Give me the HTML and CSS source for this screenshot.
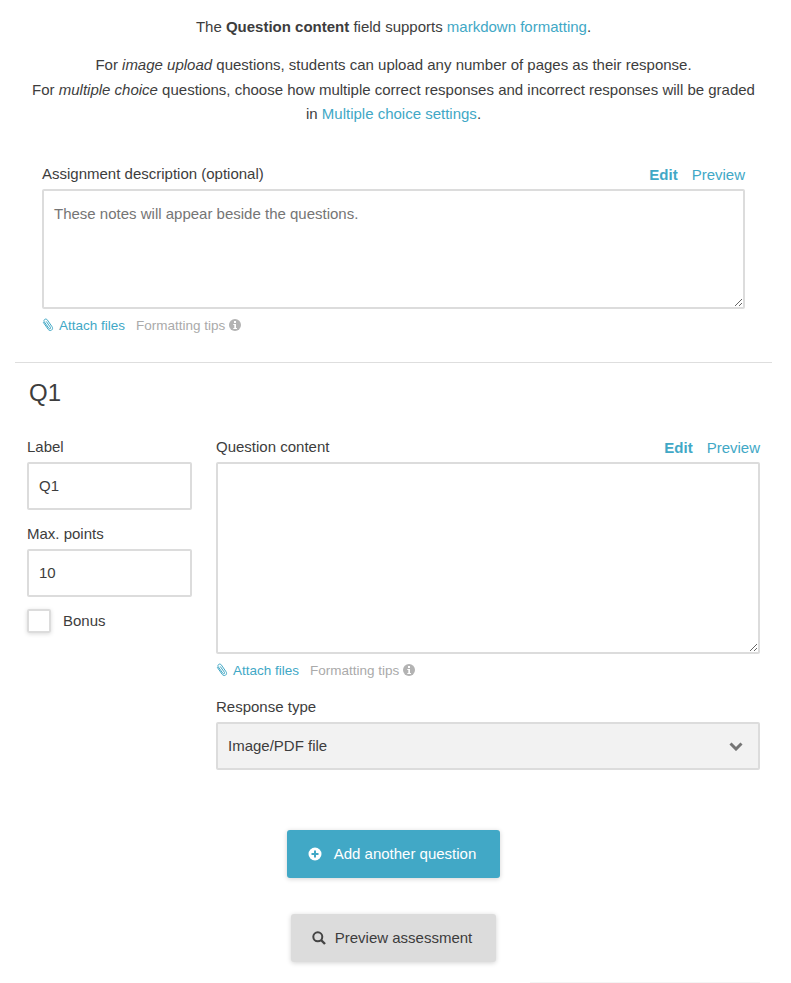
FILE: index.html
```html
<!DOCTYPE html>
<html>
  <head>
    <meta charset="utf-8" />
    <title>Edit assessment</title>
    <link rel="stylesheet" href="styles.css">
  </head>
  <body>
    <div class="help">
      <p>The <b>Question content</b> field supports <a href="#">markdown formatting</a>.</p>
      <p>
        For <i>image upload</i> questions, students can upload any number of pages as their response.<br>
        For <i>multiple choice</i> questions, choose how multiple correct responses and incorrect responses will be graded<br>
        in <a href="#">Multiple choice settings</a>.
      </p>
    </div>

    <div class="description">
      <div class="field-head">
        <label>Assignment description (optional)</label>
        <div class="tabs"><a class="active" href="#">Edit</a><a href="#">Preview</a></div>
      </div>
      <textarea class="desc-text" placeholder="These notes will appear beside the questions."></textarea>
      <div class="field-foot">
        <a href="#">
          <svg class="clip" viewBox="0 0 12 14"><path d="M1.200 4.200l5 7.200c.9 1.200 2.300 1.500 3.400.7s1.300-2.200.4-3.400L5.300 1.900C4.700 1 3.500.8 2.700 1.400S1.700 3 2.300 3.900l4.600 6.500c.4.500 1 .6 1.400.3s.5-.9.100-1.400L4.200 3.400" fill="none" stroke="#41a8c6" stroke-width="1"/></svg>
          Attach files
        </a>
        <span class="tips">Formatting tips
          <svg class="icon" viewBox="0 0 12 12"><circle cx="6" cy="6" r="6" fill="#b3b3b3"/><rect x="5" y="2" width="2" height="2" fill="#fff"/><path d="M4.300 5h2.700v4h1v1H4.300V9h1V6h-1z" fill="#fff"/></svg>
        </span>
      </div>
    </div>

    <hr class="divider">

    <div class="question">
      <h2>Q1</h2>
      <div class="question-row">
        <div class="side">
          <label>Label</label>
          <input class="text-input" type="text" value="Q1">
          <label class="points-label">Max. points</label>
          <input class="text-input" type="text" value="10">
          <div class="bonus"><span class="check"></span><label>Bonus</label></div>
        </div>
        <div class="main">
          <div class="field-head">
            <label>Question content</label>
            <div class="tabs"><a class="active" href="#">Edit</a><a href="#">Preview</a></div>
          </div>
          <textarea class="content-text"></textarea>
          <div class="field-foot">
            <a href="#">
              <svg class="clip" viewBox="0 0 12 14"><path d="M1.200 4.200l5 7.200c.9 1.200 2.300 1.500 3.400.7s1.300-2.200.4-3.400L5.300 1.900C4.700 1 3.500.8 2.700 1.400S1.700 3 2.300 3.900l4.600 6.500c.4.500 1 .6 1.400.3s.5-.9.100-1.400L4.200 3.400" fill="none" stroke="#41a8c6" stroke-width="1"/></svg>
              Attach files
            </a>
            <span class="tips">Formatting tips
              <svg class="icon" viewBox="0 0 12 12"><circle cx="6" cy="6" r="6" fill="#b3b3b3"/><rect x="5" y="2" width="2" height="2" fill="#fff"/><path d="M4.300 5h2.700v4h1v1H4.300V9h1V6h-1z" fill="#fff"/></svg>
            </span>
          </div>
          <label class="type-label">Response type</label>
          <div class="select">
            <span>Image/PDF file</span>
            <svg class="chevron" viewBox="0 0 14 10"><path d="M1.500 2.500L7 8l5.500-5.500" fill="none" stroke="#757575" stroke-width="3"/></svg>
          </div>
        </div>
      </div>
    </div>

    <div class="actions">
      <button class="btn btn-add">
        <svg class="btn-icon" viewBox="0 0 14 14"><circle cx="7" cy="7" r="6.500" fill="#fff"/><path d="M7 3.500v7M3.500 7h7" stroke="#41a8c6" stroke-width="2"/></svg>
        Add another question
      </button>
      <button class="btn btn-preview">
        <svg class="btn-icon" viewBox="0 0 14 14"><circle cx="5.800" cy="5.800" r="4.500" fill="none" stroke="#444" stroke-width="2"/><path d="M9 9l4 4" stroke="#444" stroke-width="2.400"/></svg>
        Preview assessment
      </button>
    </div>
    <div class="bottom-edge"></div>
  </body>
</html>
```

FILE: styles.css
```css
html,
body {
  margin: 0;
  background: white;
}
body {
  height: 983px;
  overflow: hidden;
  font-family: "Liberation Sans", Arial, sans-serif;
  font-size: 15px;
  line-height: 20px;
  color: #3d3d3d;
}
a {
  color: #41a8c6;
  text-decoration: none;
}
label {
  display: block;
}
.help {
  padding: 15px 34px 0 30px;
  text-align: center;
}
.help p {
  margin: 0 0 14px;
  line-height: 24.4px;
}
.description {
  margin: 37.3px 46px 0 42px;
}
.field-head {
  display: flex;
  justify-content: space-between;
  align-items: flex-end;
  height: 20px;
  margin-bottom: 5px;
}
.tabs {
  display: flex;
  gap: 14px;
  margin-bottom: -1px;
}
.tabs .active {
  font-weight: bold;
}
textarea {
  display: block;
  width: 100%;
  box-sizing: border-box;
  margin: 0;
  padding: 13px 10px;
  border: 2px solid #dcdcdc;
  border-radius: 2px;
  outline: none;
  font-family: inherit;
  font-size: 15px;
  line-height: 20px;
}
textarea::placeholder {
  color: #757575;
}
.desc-text {
  height: 120px;
}
.content-text {
  height: 192px;
}
.field-foot {
  display: flex;
  gap: 11px;
  margin-top: 7px;
  font-size: 13.5px;
  line-height: 20px;
}
.tips {
  color: #aaa;
}
.icon {
  width: 12px;
  height: 12px;
  vertical-align: -1px;
}
.clip {
  width: 12px;
  height: 14px;
  margin-right: 2px;
  vertical-align: -2px;
}
.divider {
  margin: 26px 19px 0 15px;
  border: 0;
  border-top: 1px solid #dedede;
}
.question {
  padding: 0 31px 0 27px;
}
.question h2 {
  margin: 16px 0 0 2px;
  font-size: 24px;
  font-weight: normal;
  line-height: 28px;
}
.question-row {
  display: flex;
  gap: 24px;
  margin-top: 30px;
}
.side {
  flex: 0 0 165px;
}
.side label {
  height: 20px;
  margin-bottom: 5px;
}
.main {
  flex: 1;
}
.text-input {
  display: block;
  width: 100%;
  height: 48px;
  box-sizing: border-box;
  margin: 0;
  padding: 0 10px 1px;
  border: 2px solid #dcdcdc;
  border-radius: 2px;
  outline: none;
  color: #3d3d3d;
  font-family: inherit;
  font-size: 15px;
}
.side .points-label {
  margin-top: 14px;
}
.bonus {
  display: flex;
  align-items: center;
  gap: 12px;
  margin-top: 12px;
}
.side .bonus label {
  margin: 0;
}
.check {
  width: 24px;
  height: 24px;
  box-sizing: border-box;
  border: 2px solid #dcdcdc;
  border-radius: 2px;
  box-shadow: 0 1px 4px rgba(0, 0, 0, 0.15);
}
.type-label {
  margin-top: 16px;
  margin-bottom: 5px;
}
.select {
  display: flex;
  justify-content: space-between;
  align-items: center;
  height: 48px;
  box-sizing: border-box;
  padding: 0 15px 0 10px;
  background: #f2f2f2;
  border: 2px solid #dcdcdc;
  border-radius: 2px;
}
.chevron {
  width: 14px;
  height: 10px;
}
.actions {
  display: flex;
  flex-direction: column;
  align-items: center;
  gap: 36px;
  margin-top: 60px;
  padding-right: 4px;
}
.btn {
  display: flex;
  align-items: center;
  justify-content: center;
  height: 48px;
  box-sizing: border-box;
  padding: 0 3px 1px 0;
  border: 0;
  border-radius: 3px;
  font-family: inherit;
  font-size: 15px;
  box-shadow: 0 1px 5px rgba(0, 0, 0, 0.18);
}
.btn-add {
  width: 213px;
  gap: 12px;
  background: #41a8c6;
  color: #fff;
}
.btn-preview {
  width: 205px;
  gap: 9px;
  background: #dcdcdc;
  color: #3d3d3d;
}
.btn-icon {
  width: 14px;
  height: 14px;
  margin-top: 1px;
}
.bottom-edge {
  margin: 20px 31px 0 530px;
  height: 1px;
  background: #f4f4f4;
}
```
